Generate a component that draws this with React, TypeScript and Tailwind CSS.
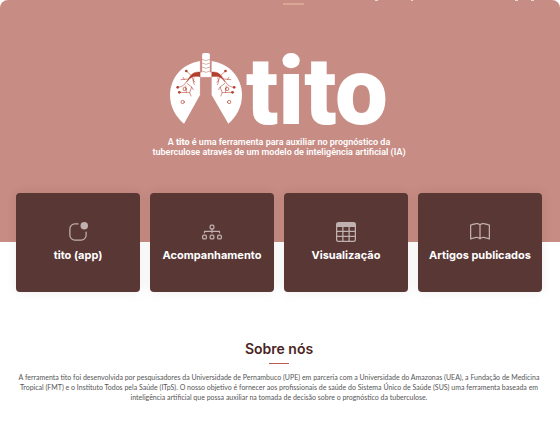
import type { IconType } from "react-icons";
import { BsAppIndicator, BsBook, BsDiagram3, BsTable } from "react-icons/bs";

const cards: { label: string; Icon: IconType }[] = [
  { label: "tito (app)", Icon: BsAppIndicator },
  { label: "Acompanhamento", Icon: BsDiagram3 },
  { label: "Visualização", Icon: BsTable },
  { label: "Artigos publicados", Icon: BsBook },
];

function Bronchi() {
  return (
    <g fill="none" stroke="#b3402f" strokeLinecap="round">
      <path d="M117 81C99 79 89 86 77 111C86 98 96 92 117 95Z" fill="#b3402f" strokeWidth="1" />
      <path d="M90 91L77 79M82 102L60 104M66 97L70 104M82 105C70 112 75 124 50 127M78 115L92 126L86 143L54 142M93 97C98 104 96 113 100 119M92 126L97 134M86 143L90 153M99 99L97 108L102 111M74 123L76 142" strokeWidth="1.7" />
      <circle cx="71" cy="132" r="5" strokeWidth="2" />
      <circle cx="65" cy="171" r="5" strokeWidth="2" />
      <g fill="#b3402f" stroke="none">
        <circle cx="76" cy="78" r="4" />
        <circle cx="50" cy="127" r="4" />
        <circle cx="55" cy="142" r="4" />
      </g>
    </g>
  );
}

function Lungs() {
  return (
    <svg viewBox="27 24 216 213" className="h-[71px] w-[72px]" aria-hidden="true">
      <g fill="#fff">
        <path d="M117 48C65 56 27 98 27 150C27 185 43 215 69 236L117 150Z" />
        <path d="M152 48C205 56 243 98 243 150C243 185 227 215 202 236L152 150Z" />
        <rect x="117" y="82" width="36" height="14" />
        <rect x="123" y="24" width="24" height="62" rx="7" />
      </g>
      <path d="M117 48V150M152 48V150M117 97H152" stroke="#e4c3be" strokeWidth="1" />
      <path d="M123 43Q135 51 147 43M123 54Q135 62 147 54M123 66Q135 74 147 66M123 78Q135 86 147 78M122 30V80M148 30V80" fill="none" stroke="#c9897e" strokeWidth="2" />
      <Bronchi />
      <g transform="translate(269.500 0) scale(-1 1)">
        <Bronchi />
      </g>
    </svg>
  );
}

export default function App() {
  return (
    <main className="bg-white">
      <div className="relative rounded-t-lg bg-[#c78c84] pb-12">
        <div aria-hidden="true">
          <span className="absolute top-[3px] left-1/2 ml-[3px] h-[2px] w-[21px] bg-[#d9a694]" />
          <span className="absolute top-0 right-[182px] h-px w-[3px] bg-[#ecd6d2]" />
          <span className="absolute top-0 right-[147px] h-px w-[2px] bg-[#ecd6d2]" />
          <span className="absolute top-0 right-[42px] h-px w-[3px] bg-[#ecd6d2]" />
          <span className="absolute top-0 right-[26px] h-px w-[3px] bg-[#ecd6d2]" />
        </div>
        <header className="flex flex-col items-center pt-[53px] pr-[18px] pl-4 text-white">
          <h1 className="flex h-[71px] items-start gap-1">
            <Lungs />
            <span className="font-['Roboto',sans-serif] text-[94px] leading-[78px] font-black">tito</span>
          </h1>
          <p className="mt-[13px] text-center font-['Roboto',sans-serif] text-[9px] leading-[10px] font-semibold">
            A <b className="font-extrabold">tito</b> é uma ferramenta para auxiliar no prognóstico da
            <br />
            tuberculose através de um modelo de inteligência artificial (IA)
          </p>
        </header>
        <div className="h-[37px]" />
      </div>
      <nav className="relative -mt-[49px] grid grid-cols-4 gap-[10px] pr-[18px] pl-4">
        {cards.map(({ label, Icon }) => (
          <a
            key={label}
            href="#"
            className="flex h-[99px] flex-col items-center rounded bg-[#593735] pt-[29px] shadow-[0_0_12px_rgba(0,0,0,0.08)]"
          >
            <Icon className="size-5 text-[#c0b1b0]" />
            <span className="mt-[3px] font-['Inter',sans-serif] text-[11px] leading-5 font-bold whitespace-nowrap text-white">
              {label}
            </span>
          </a>
        ))}
      </nav>
      <section className="pt-[47px] pr-[18px] pb-6 pl-4 text-center">
        <h2 className="font-['Inter',sans-serif] text-[14px] leading-5 font-semibold text-[#4a2422]">Sobre nós</h2>
        <div className="mx-auto mt-1 h-px w-5 bg-[#b85d55]" />
        <p className="mt-2 font-['Lato',sans-serif] text-[7px] leading-[10px] text-[#555]">
          A ferramenta tito foi desenvolvida por pesquisadores da Universidade de Pernambuco (UPE) em parceria com a Universidade do Amazonas (UEA), a Fundação de Medicina Tropical (FMT) e o Instituto Todos pela Saúde (ITpS). O nosso objetivo é fornecer aos profissionais de saúde do Sistema Único de Saúde (SUS) uma ferramenta baseada em inteligência artificial que possa auxiliar na tomada de decisão sobre o prognóstico da tuberculose.
        </p>
      </section>
    </main>
  );
}
